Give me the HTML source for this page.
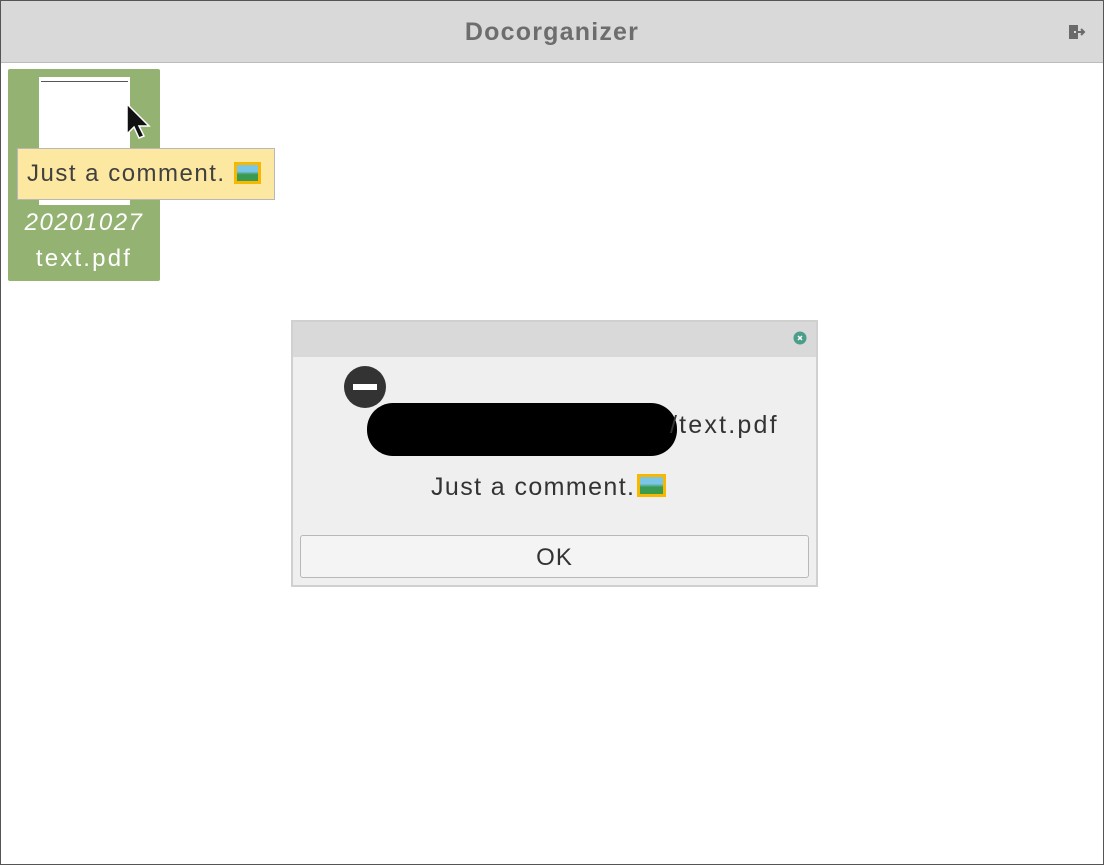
<!DOCTYPE html>
<html><head><style>
body{margin:0;width:1104px;height:865px;overflow:hidden;background:#fff;font-family:"Liberation Sans","DejaVu Sans",sans-serif;position:relative}
.a{position:absolute}
</style></head><body>
<div class="a" style="left:0;top:0;width:1102px;height:863px;border:1px solid #555;background:#fff"></div>
<div class="a" style="left:1px;top:1px;width:1102px;height:61px;background:#d9d9d9;border-bottom:1px solid #bcbcbc"></div>
<div class="a" style="left:0;top:18px;width:1104px;text-align:center;font-size:25px;font-weight:bold;color:#6d6d6d;letter-spacing:1.2px">Docorganizer</div>
<svg class="a" style="left:1068px;top:24px" width="18" height="16" viewBox="0 0 18 16"><path d="M1 1h9v14H1z" fill="#6a6a6a"/><path d="M10 8h6M13 5l3 3-3 3" stroke="#6a6a6a" stroke-width="2" fill="none"/><rect x="6" y="7" width="2" height="2" fill="#ddd"/></svg>

<div class="a" style="left:8px;top:69px;width:152px;height:212px;background:#94b272;border-radius:2px"></div>
<div class="a" style="left:39px;top:77px;width:91px;height:128px;background:#fff"></div>
<div class="a" style="left:41px;top:81px;width:87px;height:1px;background:#555"></div>
<div class="a" style="left:8px;top:206px;width:152px;text-align:center;color:#fff;font-size:24px;font-style:italic;line-height:34px;letter-spacing:1.5px">20201027</div>
<div class="a" style="left:8px;top:242px;width:152px;text-align:center;color:#fff;font-size:24px;line-height:34px;letter-spacing:2.2px">text.pdf</div>
<svg class="a" style="left:125px;top:102px" width="26" height="38" viewBox="0 0 26 38"><path d="M2 2v30l7-7 5 11 5-2-5-10h10z" fill="#111" stroke="#fff" stroke-width="1.5"/></svg>
<div class="a" style="left:17px;top:148px;width:256px;height:50px;background:#fce8a0;border:1px solid #b8b8b8"></div>
<div class="a" style="left:27px;top:160px;font-size:24px;color:#404040;letter-spacing:1.5px">Just a comment.</div>
<div class="a" style="left:234px;top:162px;width:27px;height:22px;background:#f8b800"><div style="margin:3px;width:21px;height:16px;background:linear-gradient(#7ac6e8 40%,#3a9a50 60%)"></div></div>

<div class="a" style="left:291px;top:320px;width:523px;height:263px;border:2px solid #d0d0d0;background:#efefef"></div>
<div class="a" style="left:293px;top:322px;width:523px;height:35px;background:#d9d9d9"></div>
<svg class="a" style="left:793px;top:331px" width="14" height="14"><circle cx="7" cy="7" r="6.5" fill="#4a9e8a"/><path d="M5 5l4 4M9 5l-4 4" stroke="#fff" stroke-width="1.5"/></svg>
<svg class="a" style="left:344px;top:366px" width="42" height="42"><circle cx="21" cy="21" r="21" fill="#333"/><rect x="9" y="18" width="24" height="6" fill="#fff"/></svg>
<div class="a" style="left:367px;top:403px;width:310px;height:53px;background:#000;border-radius:26px"></div>
<div class="a" style="left:670px;top:411px;font-size:25px;color:#333;letter-spacing:2.2px">/text.pdf</div>
<div class="a" style="left:431px;top:473px;font-size:25px;color:#333;letter-spacing:1.4px">Just a comment.</div>
<div class="a" style="left:637px;top:474px;width:29px;height:23px;background:#f8b800"><div style="margin:3px;width:23px;height:17px;background:linear-gradient(#7ac6e8 40%,#3a9a50 60%)"></div></div>
<div class="a" style="left:300px;top:535px;width:507px;height:41px;border:1px solid #b8b8b8;border-radius:3px;background:#f4f4f4;text-align:center;line-height:43px;font-size:24px;color:#333;letter-spacing:1px">OK</div>
</body></html>
